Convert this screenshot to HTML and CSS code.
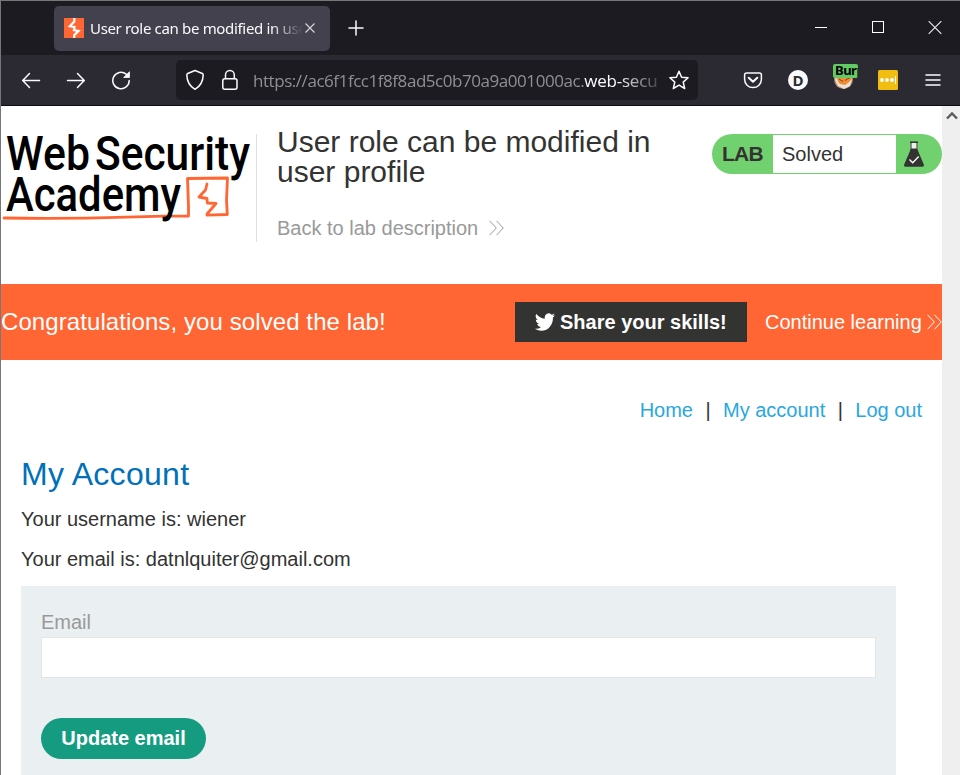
FILE: index.html
```html
<!DOCTYPE html>
<html lang="en">
<head>
<meta charset="utf-8">
<title>User role can be modified in user profile</title>
<link rel="stylesheet" href="styles.css">
</head>
<body>
<div class="window">
  <div class="tabstrip">
    <div class="tab">
      <svg class="favicon" width="20" height="20" viewBox="0 0 20 20"><rect width="20" height="20" fill="#ff6633"/><path d="M10.300 0v3.500L5.800 8.300l4.700.7-.6 3.200 4.600.7-4.300 4.300V20" fill="none" stroke="#fff" stroke-width="2.200"/></svg>
      <span class="tab-title">User role can be modified in user</span>
      <svg class="tab-close" width="10" height="10" viewBox="0 0 10 10"><path d="M.5.5l9 9M9.500.5l-9 9" stroke="#d5d4da" stroke-width="1.200"/></svg>
    </div>
    <svg class="newtab" width="16" height="16" viewBox="0 0 16 16"><path d="M8 1v14M1 8h14" stroke="#fbfbfe" stroke-width="1.500" stroke-linecap="round"/></svg>
    <div class="controls">
      <svg width="12" height="14" viewBox="0 0 12 14"><path d="M0 6.500h12" stroke="#fff"/></svg>
      <svg width="12" height="14" viewBox="0 0 12 14"><rect x=".5" y=".5" width="11" height="11" fill="none" stroke="#fff"/></svg>
      <svg width="14" height="14" viewBox="0 0 14 14"><path d="M.7.200l12.600 12.600M13.300.200L.7 12.800" stroke="#e8e8ea" stroke-width="1.200"/></svg>
    </div>
  </div>
  <div class="toolbar">
    <div class="nav">
      <svg width="20" height="20" viewBox="0 0 20 20"><path d="M18.500 10.500H2M8.500 3.500L1.700 10.500l6.800 7" class="ln"/></svg>
      <svg width="20" height="20" viewBox="0 0 20 20"><path d="M1.500 10.500H18M11.500 3.500l6.800 7-6.800 7" class="ln"/></svg>
      <svg width="20" height="20" viewBox="0 0 20 20"><path d="M15.200 4.200A8.200 8.200 0 1 0 18.200 10.500" class="ln"/><path d="M18.500 1.700V7.500h-5.800z" fill="#fbfbfe" stroke="#fbfbfe" stroke-width=".8" stroke-linejoin="round"/></svg>
    </div>
    <div class="urlbar">
      <svg class="shield" width="20" height="22" viewBox="0 0 20 22"><path d="M10 1.500L17.300 4.500c.8.4 1 .8.9 1.600-.2 5.700-3 11.200-8.200 14.200C4.800 17.300 2 11.800 1.800 6.100c0-.8.1-1.200.9-1.600z" class="ln"/></svg>
      <svg class="lock" width="18" height="22" viewBox="0 0 18 22"><rect x="1.800" y="9.700" width="14.200" height="10.500" rx="2" class="ln"/><path d="M4.500 9.500V6a4.400 4.400 0 0 1 8.800 0V9.500" class="ln"/></svg>
      <span class="url">https://ac6f1fcc1f8f8ad5c0b70a9a001000ac.<b>web-secu</b></span>
      <svg class="star" width="22" height="22" viewBox="0 0 22 22"><path d="M11 2.200l2.600 6 6.500.6-4.900 4.300 1.500 6.400-5.700-3.400-5.700 3.400 1.500-6.400L1.900 8.800l6.500-.6z" class="ln"/></svg>
    </div>
    <div class="addons">
      <svg width="20" height="20" viewBox="0 0 20 20"><path d="M3.600 3h12.800q2 0 2 2v4.200c0 4.700-3.700 8.400-8.400 8.400s-8.400-3.700-8.400-8.400V5q0-2 2-2z" class="ln"/><path d="M5.700 7.700L10 11.800l4.300-4.100" class="ln thick"/></svg>
      <span class="disc">D</span>
      <span class="fox"><svg width="22" height="20" viewBox="0 0 22 20"><circle cx="10.500" cy="9.500" r="9.500" fill="#b58a63"/><circle cx="10.500" cy="9" r="8.300" fill="#ddd6cc"/><path d="M3 5l15-1 1 6-5 6-4 1-4-3z" fill="#f28c32"/><path d="M2 9l5 5 5 1 3-2 4-4-2 7-6 3-6-3z" fill="#e9e2d9"/><path d="M6 9l4 2.500M12 10.500l5-3" stroke="#784525"/></svg><span class="badge">Burp</span></span>
      <svg width="20" height="20" viewBox="0 0 20 20"><rect width="20" height="20" rx="1.500" fill="#f1bd12"/><circle cx="4" cy="10" r="1.900" fill="#fff"/><circle cx="9" cy="10" r="1.900" fill="#fff"/><circle cx="14" cy="10" r="1.900" fill="#fff"/><path d="M17.500 6v8" stroke="#fff"/></svg>
      <svg width="16" height="14" viewBox="0 0 16 14"><path d="M1 2h14M1 7h14M1 12h14" class="ln"/></svg>
    </div>
  </div>
  <div class="viewport">
    <main class="page">
      <header class="lab-header">
        <svg class="logo" width="255" height="108" viewBox="1 134 255 108">
          <g fill="none" stroke="#ff6633" stroke-width="2.800" stroke-linejoin="round" stroke-linecap="round"><path d="M4 218c48 .8 85 .3 122-.9l38-1M164 216.100l24.500-.1V206l-1-27.500 40-.5-1 22 .8 14.500-20.300.7"/><path d="M207 184l-1.500 6-6.500 7 8 1.500.3 4.500 8.700.5-9 10.500"/></g>
          <g class="logo-text"><text x="6" y="170" textLength="84" lengthAdjust="spacingAndGlyphs">Web</text><text x="95" y="170" textLength="155" lengthAdjust="spacingAndGlyphs">Security</text><text x="6" y="211" textLength="175" lengthAdjust="spacingAndGlyphs">Academy</text></g>
        </svg>
        <div class="headline">
          <h2>User role can be modified in<br>user profile</h2>
          <a class="back">Back to lab description<svg width="15" height="16" viewBox="0 0 15 16"><path d="M.6.8L7.300 8 .6 15.200M7.500.8L14.200 8l-6.700 7.200" fill="none" stroke="currentColor"/></svg></a>
        </div>
        <div class="lab-status">
          <strong>LAB</strong><span>Solved</span>
          <svg width="20" height="26" viewBox="0 0 20 26"><path d="M6.500 1.500v7h7v-7z" fill="#eaf5e8"/><path d="M6 1.200h8" stroke="#333332" stroke-width="1.500"/><path d="M7 1v9M13 1v9" stroke="#333332"/><path d="M7 7.500h6l6.800 16q.6 2.300-1.600 2.300H1.800q-2.200 0-1.600-2.300z" fill="#333332"/><path d="M5.500 18.500l3.200 3.300 6-6.300" fill="none" stroke="#fff" stroke-width="1.300"/></svg>
        </div>
      </header>
      <section class="banner">
        <h4>Congratulations, you solved the lab!</h4>
        <a class="share"><svg width="20" height="18" viewBox="0 2 24 20" preserveAspectRatio="none"><path fill="#fff" d="M23.950 4.570a10 10 0 0 1-2.820.78 4.950 4.950 0 0 0 2.160-2.730c-.95.560-2 .960-3.130 1.190a4.920 4.920 0 0 0-8.380 4.480C7.690 8.100 4.070 6.130 1.640 3.160a4.920 4.920 0 0 0 1.520 6.570 4.900 4.900 0 0 1-2.230-.610v.060c0 2.380 1.700 4.370 3.950 4.820a5 5 0 0 1-2.210.090 4.940 4.940 0 0 0 4.600 3.420A9.870 9.870 0 0 1 0 19.540a13.990 13.990 0 0 0 7.550 2.210c9.050 0 14-7.500 14-13.980l-.02-.64a9.930 9.930 0 0 0 2.420-2.560z"/></svg>Share your skills!</a>
        <a class="continue">Continue learning<svg width="15" height="16" viewBox="0 0 15 16"><path d="M.6.8L7.300 8 .6 15.200M7.500.8L14.200 8l-6.700 7.200" fill="none" stroke="currentColor"/></svg></a>
      </section>
      <nav class="links"><a>Home</a><i>|</i><a>My account</a><i>|</i><a>Log out</a></nav>
      <section class="account">
        <h1>My Account</h1>
        <p>Your username is: wiener</p>
        <p>Your email is: datnlquiter@gmail.com</p>
        <form class="email-form">
          <label for="email">Email</label>
          <input id="email" type="email">
          <button type="button">Update email</button>
        </form>
      </section>
    </main>
    <div class="scrollbar"><svg width="12" height="9" viewBox="0 0 12 9"><path d="M1 7.500l5-5 5 5" fill="none" stroke="#5c5c5c" stroke-width="2.400"/></svg></div>
  </div>
</div>
</body>
</html>
```

FILE: styles.css
```css
* { box-sizing: border-box; }
body { margin: 0; overflow: hidden; font-family: "Liberation Sans", Arial, sans-serif; font-size: 20px; color: #333332; }
h1, h2, h4, p { margin: 0; font-weight: 400; }
svg { display: block; flex: none; }
.window { height: 775px; border: solid #777; border-width: 1px 0 0 1px; display: flex; flex-direction: column; overflow: hidden; }
.ln { fill: none; stroke: #fbfbfe; stroke-width: 1.500; stroke-linecap: round; stroke-linejoin: round; }
.thick { stroke-width: 2; }

.tabstrip { height: 54px; background: #1c1b22; display: flex; align-items: center; padding-left: 53px; flex: none; }
.tab { width: 276px; height: 45px; background: #42414d; border-radius: 5px; display: flex; align-items: center; padding-left: 10px; }
.tab-title { width: 213px; margin-left: 6px; overflow: hidden; white-space: nowrap; font: 15px "Noto Sans", sans-serif; letter-spacing: -.33px; color: #fbfbfe; -webkit-mask-image: linear-gradient(to right, #000 85%, transparent); mask-image: linear-gradient(to right, #000 85%, transparent); }
.tab-close { margin-left: 2px; }
.newtab { margin-left: 18px; }
.controls { margin-left: auto; display: flex; align-items: center; gap: 45px; padding-right: 18px; }
.controls svg:last-child { margin-left: -1px; }

.toolbar { height: 51px; background: #2b2a33; border-bottom: 1px solid #0c0c0d; display: flex; align-items: center; flex: none; }
.nav { display: flex; gap: 25px; padding-left: 20px; }
.urlbar { margin-left: 45px; width: 522px; height: 40px; background: #1c1b22; border-radius: 5px; display: flex; align-items: center; padding-left: 9px; }
.lock { margin-left: 16px; }
.url { margin-left: 14px; width: 406px; overflow: hidden; white-space: nowrap; font: 17px/30px "Open Sans", sans-serif; letter-spacing: -.45px; color: #8f8f96; position: relative; top: 1px; -webkit-mask-image: linear-gradient(to right, #000 90%, transparent 102%); mask-image: linear-gradient(to right, #000 90%, transparent 102%); }
.url b { font-weight: 400; color: #fbfbfe; letter-spacing: -.2px; }
.star { margin-left: 9px; }
.addons { margin-left: 45px; display: flex; align-items: center; gap: 25px; }
.disc { width: 20px; height: 20px; border-radius: 50%; background: #fbfbfe; color: #2b2a33; font: bold 15px/20px "Open Sans", sans-serif; text-align: center; }
.fox { width: 22px; height: 20px; position: relative; margin-right: -2px; }
.badge { position: absolute; left: 0; top: -6px; width: 25px; height: 14px; overflow: hidden; background: #62ca62; border-radius: 2px; color: #000; font: bold 13px/13px "Noto Sans", sans-serif; letter-spacing: -.5px; padding-left: 2px; }
.addons > svg:last-child { margin-left: 2px; }

.viewport { flex: 1; display: flex; min-height: 0; background: #fff; }
.page { width: 941px; flex: none; overflow: hidden; }
.scrollbar { flex: 1; background: #efefef; padding: 5px 0 0 4px; }
.lab-header { height: 178px; padding-top: 28px; display: flex; align-items: flex-start; }
.logo-text { font-family: "Roboto", sans-serif; font-weight: 500; font-size: 48px; fill: #000; }
.headline { height: 108px; border-left: 1px solid #e0e0e0; padding-left: 20px; width: 456px; }
.headline h2 { font-size: 30px; line-height: 30px; margin-top: -7px; white-space: nowrap; }
.back { display: flex; align-items: center; gap: 11px; color: #999; line-height: 24px; margin-top: 29px; }
.lab-status { width: 230px; height: 40px; background: #72d16f; border-radius: 20px; display: flex; align-items: center; line-height: 38px; }
.lab-status strong { width: 61px; padding-left: 10px; font-size: 21px; letter-spacing: -.8px; }
.lab-status span { width: 123px; height: 38px; background: #fff; padding-left: 9px; }
.lab-status svg { margin-left: 8px; }
.banner { height: 76px; background: #f63; display: flex; align-items: center; color: #fff; white-space: nowrap; }
.banner h4 { width: 514px; flex: none; font-size: 24px; letter-spacing: .09px; }
.share { width: 232px; flex: none; height: 40px; background: #333332; display: flex; align-items: center; gap: 5px; padding-left: 20px; font-weight: 700; }
.continue { flex: none; margin-left: 18px; display: flex; align-items: center; gap: 5px; }
.links { display: flex; justify-content: flex-end; padding: 38px 20px 0 0; line-height: 24px; color: #29a7e0; }
.links i { width: 30px; text-align: center; color: #333332; font-style: normal; }
.account { padding: 32px 46px 0 20px; }
.account h1 { font-size: 32px; line-height: 40px; letter-spacing: .3px; color: #0070ba; }
.account p { line-height: 24px; margin-top: 13px; }
.account p + p { margin-top: 16px; }
.email-form { margin-top: 15px; height: 220px; padding: 24px 20px; background: #eaeff2; display: flex; flex-direction: column; align-items: flex-start; }
.email-form label { color: #999; line-height: 24px; }
.email-form input { width: 100%; height: 41px; margin: 3px 0 40px; border: 1px solid #e4e4e4; background: #fff; }
.email-form button { width: 165px; height: 41px; border: 0; border-radius: 21px; background: #159c80; color: #fff; font: bold 20px "Liberation Sans", Arial, sans-serif; padding: 0; }
```
